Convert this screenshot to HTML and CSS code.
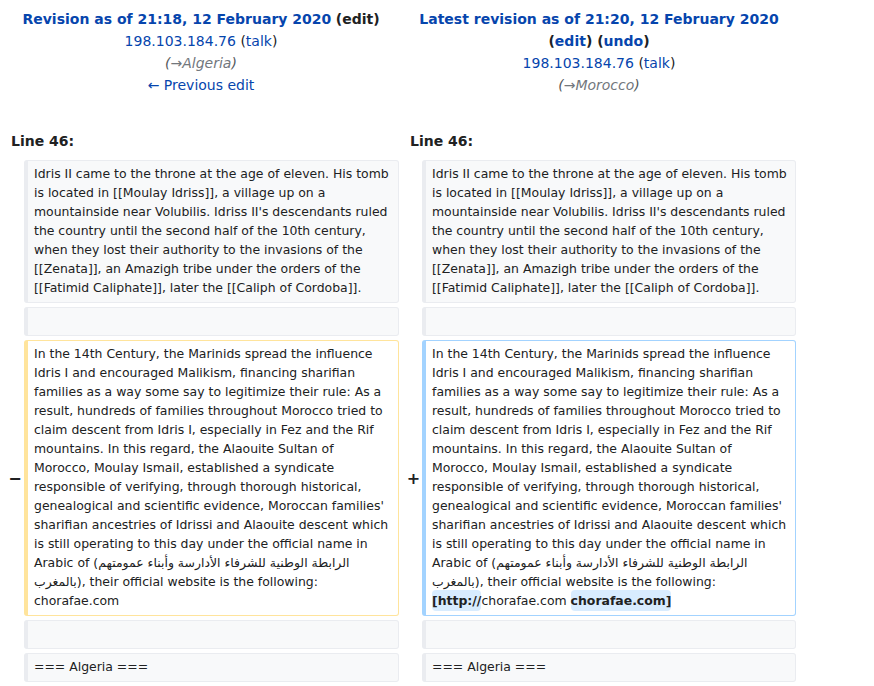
FILE: index.html
```html
<!DOCTYPE html>
<html lang="en">
<head>
<meta charset="utf-8">
<title>Diff</title>
<link rel="stylesheet" href="styles.css">
</head>
<body>
<div class="diff">
  <div class="title title-left">
    <div class="t-line"><a class="strong">Revision as of 21:18, 12 February 2020</a> <span class="strong dark">(edit)</span></div>
    <div class="t-line"><a>198.103.184.76</a> <span class="dark">(<a>talk</a>)</span></div>
    <div class="t-line"><span class="comment">(<a class="auto">→Algeria</a>)</span></div>
    <div class="t-line"><a>← Previous edit</a></div>
  </div>
  <div class="title title-right">
    <div class="t-line"><a class="strong">Latest revision as of 21:20, 12 February 2020</a> <span class="strong dark">(<a>edit</a>) (<a>undo</a>)</span></div>
    <div class="t-line"><a>198.103.184.76</a> <span class="dark">(<a>talk</a>)</span></div>
    <div class="t-line"><span class="comment">(<a class="auto">→Morocco</a>)</span></div>
  </div>

  <div class="lineno">Line 46:</div>
  <div class="lineno">Line 46:</div>

  <div class="marker"></div>
  <div class="cell context">Idris II came to the throne at the age of eleven. His tomb is located in [[Moulay Idriss]], a village up on a mountainside near Volubilis. Idriss II's descendants ruled the country until the second half of the 10th century, when they lost their authority to the invasions of the [[Zenata]], an Amazigh tribe under the orders of the [[Fatimid Caliphate]], later the [[Caliph of Cordoba]].</div>
  <div class="marker"></div>
  <div class="cell context">Idris II came to the throne at the age of eleven. His tomb is located in [[Moulay Idriss]], a village up on a mountainside near Volubilis. Idriss II's descendants ruled the country until the second half of the 10th century, when they lost their authority to the invasions of the [[Zenata]], an Amazigh tribe under the orders of the [[Fatimid Caliphate]], later the [[Caliph of Cordoba]].</div>

  <div class="marker"></div>
  <div class="cell context empty">&nbsp;</div>
  <div class="marker"></div>
  <div class="cell context empty">&nbsp;</div>

  <div class="marker">−</div>
  <div class="cell deleted">In the 14th Century, the Marinids spread the influence Idris I and encouraged Malikism, financing sharifian families as a way some say to legitimize their rule: As a result, hundreds of families throughout Morocco tried to claim descent from Idris I, especially in Fez and the Rif mountains. In this regard, the Alaouite Sultan of Morocco, Moulay Ismail, established a syndicate responsible of verifying, through thorough historical, genealogical and scientific evidence, Moroccan families' sharifian ancestries of Idrissi and Alaouite descent which is still operating to this day under the official name in Arabic of (الرابطة الوطنية للشرفاء الأدارسة وأبناء عمومتهم بالمغرب), their official website is the following: chorafae.com</div>
  <div class="marker">+</div>
  <div class="cell added">In the 14th Century, the Marinids spread the influence Idris I and encouraged Malikism, financing sharifian families as a way some say to legitimize their rule: As a result, hundreds of families throughout Morocco tried to claim descent from Idris I, especially in Fez and the Rif mountains. In this regard, the Alaouite Sultan of Morocco, Moulay Ismail, established a syndicate responsible of verifying, through thorough historical, genealogical and scientific evidence, Moroccan families' sharifian ancestries of Idrissi and Alaouite descent which is still operating to this day under the official name in Arabic of (الرابطة الوطنية للشرفاء الأدارسة وأبناء عمومتهم بالمغرب), their official website is the following: <ins class="change">[http://</ins>chorafae.com <ins class="change">chorafae.com]</ins></div>

  <div class="marker"></div>
  <div class="cell context empty">&nbsp;</div>
  <div class="marker"></div>
  <div class="cell context empty">&nbsp;</div>

  <div class="marker"></div>
  <div class="cell context">=== Algeria ===</div>
  <div class="marker"></div>
  <div class="cell context">=== Algeria ===</div>
</div>
</body>
</html>
```

FILE: styles.css
```css
html, body {
  background: #ffffff;
}
body {
  margin: 8px 0 0 0;
  font-family: "DejaVu Sans", sans-serif;
  color: #202122;
}
a {
  color: #0645ad;
  text-decoration: none;
}
.diff {
  display: grid;
  grid-template-columns: 24px 375px 23px 374px;
  row-gap: 4px;
}
.title {
  grid-column: span 2;
  text-align: center;
  font-size: 14px;
  line-height: 22px;
  padding-left: 3px;
}
.strong {
  font-weight: bold;
}
.dark {
  color: #202122;
}
.comment {
  font-style: italic;
  color: #54595d;
}
.comment .auto {
  color: #72777d;
}
.lineno {
  grid-column: span 2;
  font-size: 14px;
  font-weight: bold;
  line-height: 20px;
  padding: 31px 0 0 11px;
  margin-bottom: 5px;
}
.marker {
  display: flex;
  align-items: center;
  justify-content: center;
  padding-left: 6px;
  font-size: 16px;
  font-weight: bold;
  color: #202122;
}
.cell {
  font-size: 12.45px;
  line-height: 19px;
  padding: 3px 6px 5px 6px;
  border: 1px solid #eaecf0;
  border-left-width: 4px;
  border-radius: 3px;
  overflow-wrap: break-word;
}
.context {
  background: #f8f9fa;
  border-color: #eaecf0;
}
.deleted {
  background: #ffffff;
  border-color: #ffe49c;
}
.added {
  background: #ffffff;
  border-color: #a3d3ff;
}
.change {
  text-decoration: none;
  font-weight: bold;
  background: #d8ecff;
  border-radius: 0.33em;
  padding: 0.25em 0;
}
```
